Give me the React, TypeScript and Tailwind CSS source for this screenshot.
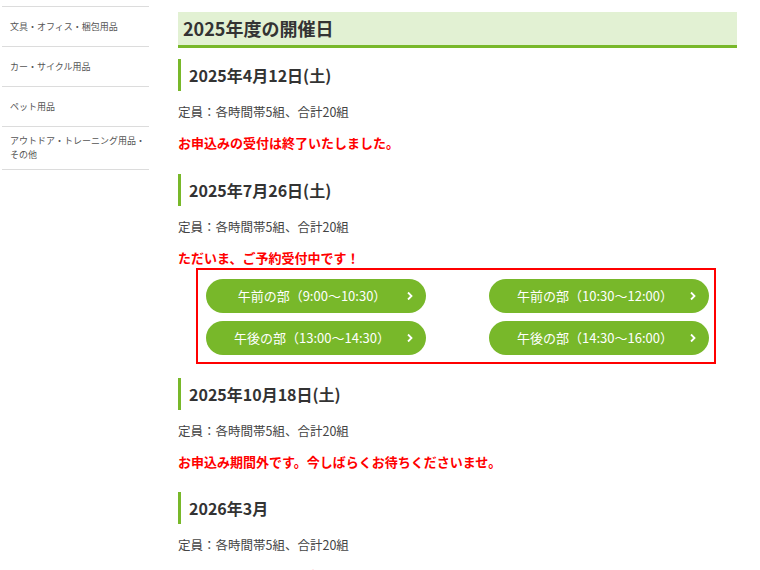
import React from 'react'

const FONT = '"Noto Sans CJK JP", "Noto Sans", sans-serif'

const MENU = [
  '文具・オフィス・梱包用品',
  'カー・サイクル用品',
  'ペット用品',
  'アウトドア・トレーニング用品・その他',
]

const SLOTS = [
  '午前の部（9:00〜10:30）',
  '午前の部（10:30〜12:00）',
  '午後の部（13:00〜14:30）',
  '午後の部（14:30〜16:00）',
]

function DateHeading({ children, className = '' }: { children: React.ReactNode; className?: string }) {
  return (
    <h3 className={`h-[32px] border-l-[3px] border-[#78b82a] pl-[8px] flex items-center text-[16px] font-bold text-[#333] ${className}`}>
      {children}
    </h3>
  )
}

function Capacity() {
  return (
    <p className="mt-[11px] leading-[20px] text-[12.5px] text-[#444]">
      定員：各時間帯5組、合計20組
    </p>
  )
}

function Notice({ children, className = '' }: { children: React.ReactNode; className?: string }) {
  return <p className={`mt-[11px] leading-[20px] text-[13px] font-bold text-[#ff0000] ${className}`}>{children}</p>
}

export default function App() {
  return (
    <div className="w-[760px] h-[570px] overflow-hidden bg-white flex" style={{ fontFamily: FONT }}>
      <aside className="w-[147px] ml-[2px] mt-[6px] shrink-0">
        <ul className="border-t border-[#dcdcdc]">
          {MENU.map(m => (
            <li key={m} className="min-h-[40px] py-[7px] pl-[8px] pr-[1px] flex items-center border-b border-[#dcdcdc] text-[9px] leading-[14px] text-[#555]">
              {m}
            </li>
          ))}
        </ul>
      </aside>

      <main className="ml-[29px] w-[559px] pt-[12px]">
        <h2 className="h-[36px] bg-[#e2f1d3] border-b-[3px] border-[#78b82a] pl-[5px] flex items-center text-[18px] font-bold text-[#333]">
          2025年度の開催日
        </h2>

        <DateHeading className="mt-[11px]">2025年4月12日(土)</DateHeading>
        <Capacity />
        <Notice>お申込みの受付は終了いたしました。</Notice>

        <DateHeading className="mt-[21px]">2025年7月26日(土)</DateHeading>
        <Capacity />
        <Notice>ただいま、ご予約受付中です！</Notice>

        <div className="ml-[18px] w-[520px] border-2 border-[#ff0000] pt-[9px] pb-[7px] pl-[8px] pr-[5px]">
          <div className="grid grid-cols-[220px_220px] gap-x-[63px] gap-y-[8px]">
            {SLOTS.map(s => (
              <a key={s} href="#" className="relative h-[34px] rounded-full bg-[#78b82a] flex items-center justify-center pr-[8px] text-[13px] text-white">
                {s}
                <span className="absolute right-[13px] top-1/2 -translate-y-1/2">
                  <svg width="6" height="9" viewBox="0 0 6 9" fill="none">
                    <path d="M1 1l3.5 3.5L1 8" stroke="white" strokeWidth="1.8" />
                  </svg>
                </span>
              </a>
            ))}
          </div>
        </div>

        <DateHeading className="mt-[14px]">2025年10月18日(土)</DateHeading>
        <Capacity />
        <Notice>お申込み期間外です。今しばらくお待ちくださいませ。</Notice>

        <DateHeading className="mt-[20px]">2026年3月</DateHeading>
        <Capacity />
        <Notice className="opacity-40">お申込み期間外です。今しばらくお待ちくださいませ。</Notice>
      </main>
    </div>
  )
}
